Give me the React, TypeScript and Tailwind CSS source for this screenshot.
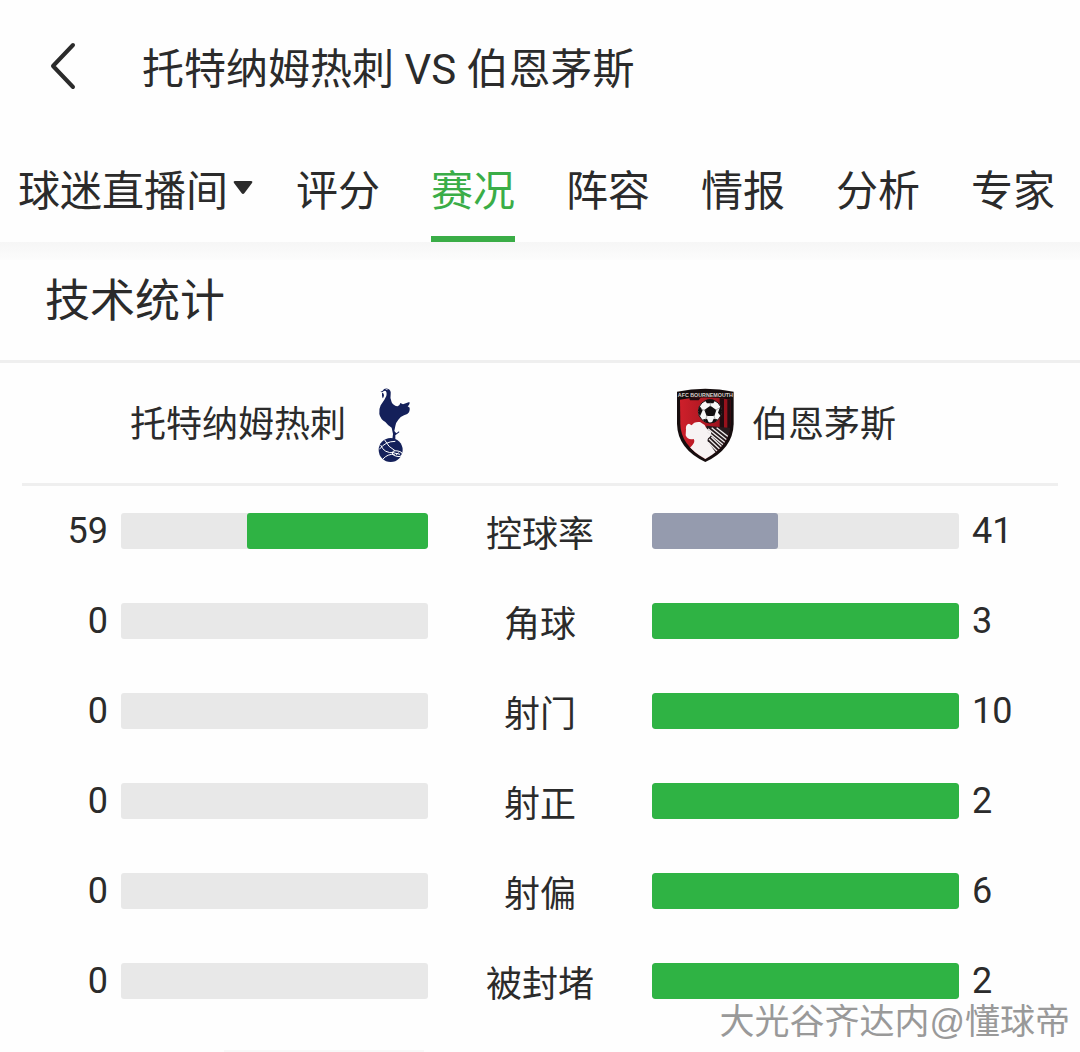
import { useState } from 'react';

const tabs = ['评分', '赛况', '阵容', '情报', '分析', '专家'];

const stats = [
  { label: '控球率', home: 59, away: 41 },
  { label: '角球', home: 0, away: 3 },
  { label: '射门', home: 0, away: 10 },
  { label: '射正', home: 0, away: 2 },
  { label: '射偏', home: 0, away: 6 },
  { label: '被封堵', home: 0, away: 2 },
];

export default function MatchStatsPage() {
  const [activeTab, setActiveTab] = useState('赛况');

  return (
    <div className="relative min-h-screen overflow-hidden bg-[#fefefe] text-[#2b2b2b] font-['Noto_Sans_CJK_SC',sans-serif]">
      <header className="flex h-[138px] items-center pl-12">
        <button aria-label="返回" className="mr-[64px] pb-1.5">
          <svg width="30" height="50" viewBox="0 0 30 50" fill="none" stroke="currentColor" strokeWidth="4" strokeLinecap="round" strokeLinejoin="round">
            <path d="M25 4 L5 25 L25 46" />
          </svg>
        </button>
        <h1 className="pt-0.5 text-[42px] leading-[60px] font-['Roboto','Noto_Sans_CJK_SC',sans-serif]">托特纳姆热刺 VS 伯恩茅斯</h1>
      </header>

      <nav className="flex h-[104px] justify-between pl-[18px] pr-[25px] text-[42px] leading-[60px]">
        <button className="flex items-center gap-[5px] pb-1">
          球迷直播间
          <svg width="20" height="14" viewBox="0 0 20 14" fill="currentColor">
            <path d="M2 0 H18 Q20 0 19 2 L11.5 12 Q10 14 8.5 12 L1 2 Q0 0 2 0 Z" />
          </svg>
        </button>
        <div className="flex gap-[51px]">
          {tabs.map((tab) => (
            <button
              key={tab}
              onClick={() => setActiveTab(tab)}
              className={`border-y-6 border-t-transparent pb-1 ${
                tab === activeTab ? 'border-b-[#3aad47] text-[#3aad47]' : 'border-b-transparent'
              }`}
            >
              {tab}
            </button>
          ))}
        </div>
      </nav>
      <div className="h-[18px] bg-linear-to-b from-[#f6f6f6] to-[#fcfcfc]" />

      <main>
        <h2 className="border-b-3 border-[#efefef] pt-1.5 pb-[30px] pl-[45px] text-[45px] leading-[64px]">技术统计</h2>

        <div className="mx-[22px] grid h-[123px] grid-cols-[1fr_224px_1fr] border-b-3 border-[#efefef] px-[99px] text-[36px]">
          <div className="flex items-center justify-end gap-2">
            <span className="pb-1 whitespace-nowrap">托特纳姆热刺</span>
            <SpursCrest />
          </div>
          <div />
          <div className="flex items-center gap-[10px] pl-4">
            <BournemouthCrest />
            <span className="pb-1 whitespace-nowrap">伯恩茅斯</span>
          </div>
        </div>

        <div className="text-[36px] leading-9">
          {stats.map((row) => (
            <StatRow key={row.label} {...row} />
          ))}
        </div>
      </main>

      <div className="mt-6 ml-[224px] h-[2px] w-[200px] bg-[#f8f8f8]" />
      <p className="absolute right-[10px] bottom-3 text-[35px] leading-9 text-[#999] font-['Liberation_Sans','Noto_Sans_CJK_SC',sans-serif]">大光谷齐达内@懂球帝</p>
    </div>
  );
}

function StatRow({ label, home, away }: { label: string; home: number; away: number }) {
  const total = home + away;

  return (
    <div className="grid h-[90px] grid-cols-[121px_1fr_224px_1fr_121px] items-center">
      <span className="pr-[13px] text-right font-['Roboto',sans-serif]">{home}</span>
      <div className="flex h-9 justify-end overflow-hidden rounded-[3px] bg-[#e8e8e8]">
        <Bar share={home / total} leading={home > away} />
      </div>
      <span className="text-center">{label}</span>
      <div className="flex h-9 overflow-hidden rounded-[3px] bg-[#e8e8e8]">
        <Bar share={away / total} leading={away > home} />
      </div>
      <span className="pl-[13px] font-['Roboto',sans-serif]">{away}</span>
    </div>
  );
}

function Bar({ share, leading }: { share: number; leading: boolean }) {
  return (
    <div
      className={`h-full rounded-[3px] ${leading ? 'bg-[#2fb344]' : 'bg-[#959bae]'}`}
      style={{ width: `${share * 100}%` }}
    />
  );
}

function SpursCrest() {
  return (
    <svg width="74" height="78" viewBox="-18 12 222 234" className="shrink-0">
      <g fill="#14205a">
        <path d="M61 36 L68 32 Q72 24 83 26 Q94 29 92 43 Q89 56 95 67 Q101 78 113 79 Q119 78 121 69 L129 73 L148 66 Q151 72 143 79 L149 83 Q150 89 147 97 Q142 105 132 106 Q121 110 115 119 Q107 128 106 138 L103 153 L109 160 L117 154 L118 157 L106 166 L106 178 L97 178 L99 162 L95 143 Q84 137 76 126 Q61 117 58 102 Q56 88 62 76 Q74 60 79 48 Q82 34 75 32 Q70 33 67 37 Z" />
        <path d="M66 38 Q72 38 72 46 Q71 53 68 55 Q65 49 66 38 Z" />
        <circle cx="92" cy="210" r="36" />
      </g>
      <g fill="none" stroke="#fff" strokeWidth="3">
        <path d="M58 208 Q76 184 106 184" />
        <path d="M62 195 Q72 221 103 218" />
        <path d="M74 180 Q85 202 105 212" />
        <path d="M69 237 Q83 221 104 223" />
        <ellipse cx="112" cy="221" rx="15" ry="8" transform="rotate(12 112 221)" />
        <path d="M103 219 L120 223 M108 224 L116 218" />
      </g>
      <path d="M77 28 L83 29" stroke="#fff" strokeWidth="2" />
    </svg>
  );
}

function BournemouthCrest() {
  return (
    <svg width="74" height="78" viewBox="9 12 222 234" className="shrink-0">
      <defs>
        <clipPath id="shield">
          <path d="M45 59 Q120 45 197 59 L196 132 Q195 196 121 237 Q47 196 46 132 Z" />
        </clipPath>
        <linearGradient id="shieldRed">
          <stop offset="0" stopColor="#d0202b" />
          <stop offset="1" stopColor="#8f101a" />
        </linearGradient>
      </defs>
      <path d="M36 35 Q121 17 206 35 L206 132 Q204 207 121 246 Q38 207 36 132 Z" fill="#160d0e" />
      <g clipPath="url(#shield)">
        <rect x="40" y="45" width="160" height="200" fill="url(#shieldRed)" />
        <path d="M164 48 H177 V148 H164 Z M187 48 H200 V160 H187 Z M71 50 L110 50 L101 61 H75 Z" fill="#210c10" />
        <path d="M124 137 L200 144 V240 H124 Z" fill="#261b1d" />
        <path d="M63 148 Q61 134 72 131 L80 136 Q87 124 105 126 L119 135 Q124 148 137 154 Q141 164 134 171 Q126 174 128 184 L153 219 L117 245 L75 203 Q93 186 86 177 Q68 181 62 166 Z" fill="#f7f3f3" />
        <g stroke="#eeeaea" strokeWidth="4">
          <path d="M129 146 L193 198 M127 155 L187 205 M139 171 L181 211 M132 177 L174 217 M129 187 L166 223 M140 143 L198 190" />
          <path d="M155 143 L201 179" />
        </g>
      </g>
      <circle cx="135" cy="94" r="35" fill="#f8f8f8" stroke="#1a1112" strokeWidth="3" />
      <g fill="#120f10">
        <path d="M136 77 L154 90 L148 108 H125 L118 90 Z" />
        <path d="M120 62 Q135 54 150 62 L145 70 H126 Z M166 78 Q174 92 167 108 L159 98 Z M104 78 L113 91 L105 109 Q97 94 104 78 Z M114 118 L126 116 L132 129 Q119 128 114 118 Z M157 118 L146 116 L140 129 Q152 128 157 118 Z" />
      </g>
      <path d="M136 80 V68 M151 90 L164 84 M146 106 L151 118 M127 106 L121 119 M121 91 L109 88" stroke="#888" strokeWidth="2" />
      <text x="121" y="52" textAnchor="middle" fill="#d8ceca" className="text-[16px] font-bold font-['Liberation_Sans',sans-serif]">AFC BOURNEMOUTH</text>
    </svg>
  );
}
